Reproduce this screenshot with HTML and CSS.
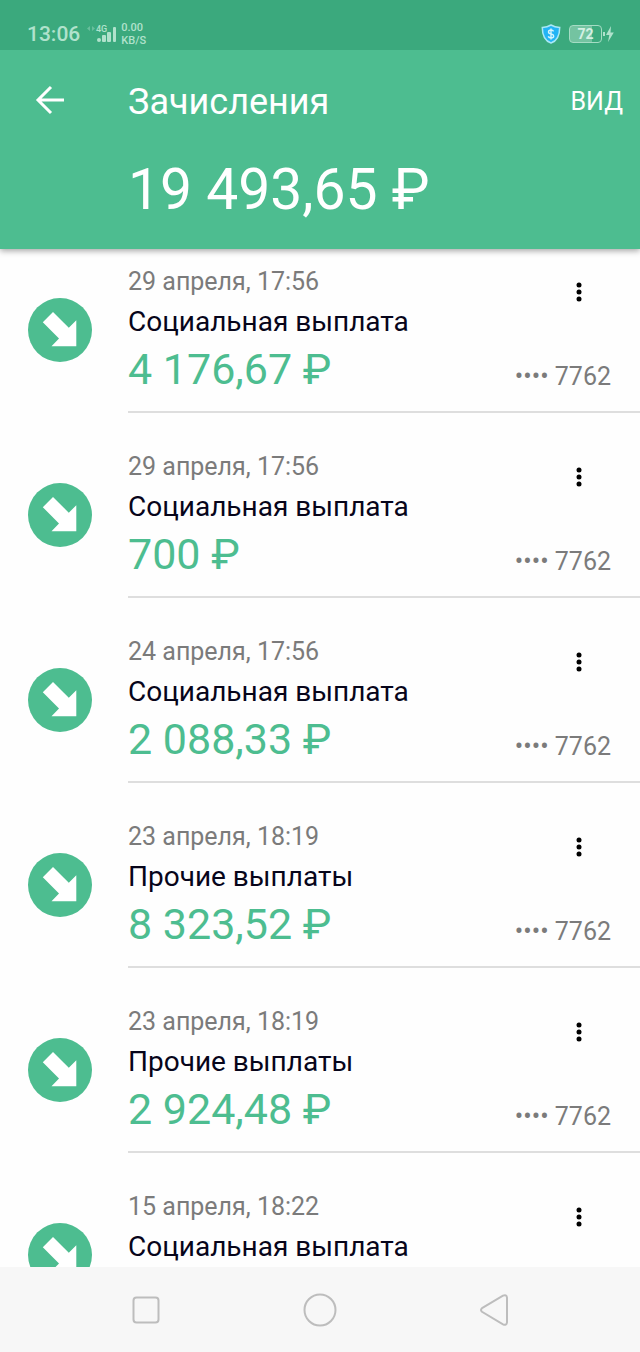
FILE: index.html
```html
<!DOCTYPE html>
<html lang="ru">
<head>
    <meta charset="UTF-8">
    <meta name="viewport" content="width=device-width, initial-scale=1.0">
    <title>Зачисления</title>
    <link rel="stylesheet" href="styles.css">
</head>
<body>
    <div class="status-bar">
        <span class="clock">13:06</span>
        <svg class="signal" width="32" height="22" viewBox="0 0 32 22" aria-hidden="true">
            <path class="signal-data" d="M3 3L0 5.500l3 2.500zM5 3l3 2.500-3 2.500z"/>
            <text x="9" y="9" class="signal-type">4G</text>
            <circle cx="12" cy="17" r="2"/>
            <rect x="15" y="12" width="4" height="7" rx="1"/>
            <rect x="20" y="9" width="4" height="10" rx="1"/>
            <rect x="26" y="4" width="3" height="15" rx="1"/>
        </svg>
        <span class="speed">0.00<br>KB/S</span>
        <div class="status-right">
            <svg width="20" height="20" viewBox="0 0 20 20" aria-hidden="true">
                <path d="M10 1c3 1.800 5.800 2.300 8.700 2.400C18.700 11 17 16.500 10 19 3 16.500 1.300 11 1.300 3.400 4.200 3.300 7 2.800 10 1z" fill="#22b4f5" stroke="#a9e8f6" stroke-width="1.500"/>
                <path d="M12.600 7.300c-.6-1-1.500-1.300-2.600-1.300-1.500 0-2.500.7-2.500 1.900 0 2.800 5.200 1.300 5.200 4 0 1.300-1.200 2-2.700 2-1.200 0-2.200-.4-2.800-1.500M10 4.500v11" fill="none" stroke="#d5f5fc" stroke-width="1.400"/>
            </svg>
            <span class="battery">72</span>
            <svg class="bolt" width="13" height="18" viewBox="0 0 13 18" aria-hidden="true">
                <rect x="1" y="7" width="2" height="4"/>
                <path d="M9 1L4 10h3.300L6 17l5.800-9.500H8.500z"/>
            </svg>
        </div>
    </div>

    <header class="header">
        <div class="toolbar">
            <button class="back" aria-label="Назад">
                <svg width="32" height="32" viewBox="0 0 32 32" fill="none" stroke="#fff" stroke-width="3">
                    <path d="M30 16H4M17 3L4 16l13 13"/>
                </svg>
            </button>
            <h1 class="title">Зачисления</h1>
            <button class="view">ВИД</button>
        </div>
        <div class="total">19 493,65 ₽</div>
    </header>

    <svg class="symbols" aria-hidden="true">
        <symbol id="income" viewBox="0 0 64 64">
            <circle cx="32" cy="32" r="32" fill="#4dbd90"/>
            <path d="M25 14L40.800 29.700l7.500-7.500v26H23.500l7.500-7.800L14.800 24.200z" fill="#fff"/>
        </symbol>
        <symbol id="dots" viewBox="0 0 8 24">
            <circle cx="4" cy="5" r="2.500"/>
            <circle cx="4" cy="12" r="2.500"/>
            <circle cx="4" cy="19" r="2.500"/>
        </symbol>
    </svg>

    <main class="content">
        <ul class="list">
            <li class="item">
                <svg class="icon"><use href="#income"/></svg>
                <div class="info">
                    <div class="details">
                        <div class="date">29 апреля, 17:56</div>
                        <div class="name">Социальная выплата</div>
                        <div class="amount">4 176,67 ₽</div>
                    </div>
                    <div class="side">
                        <button class="more" aria-label="Ещё"><svg width="8" height="24"><use href="#dots"/></svg></button>
                        <div class="card">•••• 7762</div>
                    </div>
                </div>
            </li>
            <li class="item">
                <svg class="icon"><use href="#income"/></svg>
                <div class="info">
                    <div class="details">
                        <div class="date">29 апреля, 17:56</div>
                        <div class="name">Социальная выплата</div>
                        <div class="amount">700 ₽</div>
                    </div>
                    <div class="side">
                        <button class="more" aria-label="Ещё"><svg width="8" height="24"><use href="#dots"/></svg></button>
                        <div class="card">•••• 7762</div>
                    </div>
                </div>
            </li>
            <li class="item">
                <svg class="icon"><use href="#income"/></svg>
                <div class="info">
                    <div class="details">
                        <div class="date">24 апреля, 17:56</div>
                        <div class="name">Социальная выплата</div>
                        <div class="amount">2 088,33 ₽</div>
                    </div>
                    <div class="side">
                        <button class="more" aria-label="Ещё"><svg width="8" height="24"><use href="#dots"/></svg></button>
                        <div class="card">•••• 7762</div>
                    </div>
                </div>
            </li>
            <li class="item">
                <svg class="icon"><use href="#income"/></svg>
                <div class="info">
                    <div class="details">
                        <div class="date">23 апреля, 18:19</div>
                        <div class="name">Прочие выплаты</div>
                        <div class="amount">8 323,52 ₽</div>
                    </div>
                    <div class="side">
                        <button class="more" aria-label="Ещё"><svg width="8" height="24"><use href="#dots"/></svg></button>
                        <div class="card">•••• 7762</div>
                    </div>
                </div>
            </li>
            <li class="item">
                <svg class="icon"><use href="#income"/></svg>
                <div class="info">
                    <div class="details">
                        <div class="date">23 апреля, 18:19</div>
                        <div class="name">Прочие выплаты</div>
                        <div class="amount">2 924,48 ₽</div>
                    </div>
                    <div class="side">
                        <button class="more" aria-label="Ещё"><svg width="8" height="24"><use href="#dots"/></svg></button>
                        <div class="card">•••• 7762</div>
                    </div>
                </div>
            </li>
            <li class="item">
                <svg class="icon"><use href="#income"/></svg>
                <div class="info">
                    <div class="details">
                        <div class="date">15 апреля, 18:22</div>
                        <div class="name">Социальная выплата</div>
                    </div>
                    <div class="side">
                        <button class="more" aria-label="Ещё"><svg width="8" height="24"><use href="#dots"/></svg></button>
                    </div>
                </div>
            </li>
        </ul>
    </main>

    <nav class="nav-bar">
        <button aria-label="Недавние">
            <svg width="36" height="36" viewBox="0 0 36 36"><rect x="5.500" y="5.500" width="25" height="25" rx="3"/></svg>
        </button>
        <button aria-label="Домой">
            <svg width="36" height="36" viewBox="0 0 36 36"><circle cx="18" cy="18" r="15.500"/></svg>
        </button>
        <button aria-label="Назад">
            <svg width="36" height="36" viewBox="0 0 36 36"><path d="M6 16.200L27 3.700q3.500-1.500 4 2v24.600q-.5 3.500-4 2L6 19.800q-2-1.800 0-3.600z"/></svg>
        </button>
    </nav>
</body>
</html>
```

FILE: styles.css
```css
* {
    box-sizing: border-box;
}
body {
    margin: 0;
    height: 100vh;
    display: flex;
    flex-direction: column;
    font-family: Roboto, "Noto Sans", sans-serif;
    background: #fefefe;
    color: #07051a;
}
button {
    background: none;
    border: none;
    padding: 0;
    font-family: inherit;
    color: inherit;
    cursor: pointer;
}
svg {
    display: block;
}
.symbols {
    display: none;
}

/* status bar */
.status-bar {
    flex: none;
    position: relative;
    z-index: 1;
    display: flex;
    align-items: center;
    height: 50px;
    padding: 18px 25px 0 27px;
    background: #3ba97d;
    color: #b0e2cc;
    fill: #b0e2cc;
}
.clock {
    font-size: 21px;
    font-weight: 500;
}
.signal {
    margin-left: 7px;
}
.signal-data {
    opacity: 0.4;
}
.signal-type {
    font-size: 9px;
    font-weight: 500;
}
.speed {
    margin-left: 2px;
    font-size: 11px;
    line-height: 13px;
    font-weight: 500;
}
.status-right {
    display: flex;
    align-items: center;
    margin-left: auto;
}
.battery {
    width: 33px;
    height: 18px;
    margin-left: 8px;
    border: 1px solid #a5dcc4;
    border-radius: 4px;
    background: linear-gradient(to right, #74c3a1 72%, transparent 72%);
    font-size: 14px;
    line-height: 16px;
    font-weight: 700;
    text-align: center;
    color: #d3f0e3;
}

/* header */
.header {
    flex: none;
    position: relative;
    height: 199px;
    background: #4dbd90;
    color: #fff;
    box-shadow: 0 2px 6px rgba(0, 0, 0, 0.35);
}
.toolbar {
    display: flex;
    align-items: center;
    height: 100px;
    padding: 0 17px 0 34px;
}
.back {
    width: 94px;
}
.title {
    flex: 1;
    margin: 0;
    padding-top: 4px;
    font-size: 36px;
    font-weight: 400;
}
.view {
    padding-top: 2px;
    font-size: 25px;
}
.total {
    padding-left: 128px;
    font-size: 57px;
    line-height: 80px;
}

/* operations */
.content {
    flex: 1;
    min-height: 0;
    overflow: hidden;
}
.list {
    display: flex;
    flex-direction: column;
    gap: 21px;
    margin: 0;
    padding: 0;
    list-style: none;
}
.item {
    display: flex;
    height: 164px;
    padding-left: 28px;
}
.icon {
    flex: none;
    width: 64px;
    height: 64px;
    margin: 49px 36px 0 0;
}
.info {
    flex: 1;
    display: flex;
    justify-content: space-between;
    padding: 17px 29px 16px 0;
    border-bottom: 2px solid #dedede;
}
.details {
    display: flex;
    flex-direction: column;
    gap: 8px;
}
.date {
    font-size: 25px;
    line-height: 32px;
    color: #7b7b7b;
}
.name {
    font-size: 28px;
    line-height: 32px;
}
.amount {
    font-size: 43px;
    line-height: 46px;
    color: #4dbd90;
}
.side {
    display: flex;
    flex-direction: column;
    align-items: flex-end;
    justify-content: space-between;
    padding-bottom: 2px;
}
.more {
    padding: 14px 28px;
}
.card {
    font-size: 25px;
    line-height: 32px;
    color: #7b7b7b;
}

/* system navigation */
.nav-bar {
    flex: none;
    display: flex;
    justify-content: center;
    align-items: center;
    gap: 138px;
    height: 85px;
    background: #f7f7f7;
}
.nav-bar svg {
    fill: none;
    stroke: #bdbdbd;
    stroke-width: 2;
}
```
